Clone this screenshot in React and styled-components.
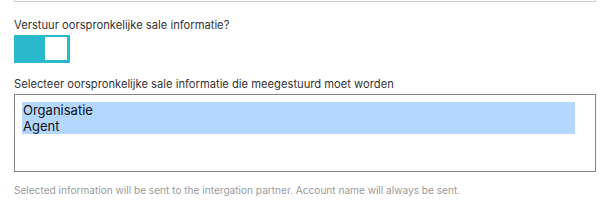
import React, { useState } from 'react';
import styled, { createGlobalStyle } from 'styled-components';

const GlobalStyle = createGlobalStyle`
    body {
        margin: 0;
        background: #fff;
        font-family: Inter, "Liberation Sans", sans-serif;
        color: #333;
    }
`;

const Page = styled.div`
    width: 582px;
    padding: 0 12px 0 14px;
`;

const PrevField = styled.div`
    height: 1px;
    border: 1px solid #cfcfcf;
    border-top: none;
`;

const Label = styled.div`
    font-size: 11.2px;
    line-height: 14px;
    color: #333;
    margin-top: ${props => props.top}px;
`;

const Toggle = styled.button`
    display: flex;
    justify-content: ${props => (props.on ? 'flex-end' : 'flex-start')};
    width: 56px;
    height: 28px;
    margin-top: 3px;
    padding: 2px 3px 2px 2px;
    border: none;
    background: ${props => (props.on ? '#29b7cb' : '#ccc')};
    cursor: pointer;
`;

const Knob = styled.span`
    display: block;
    width: 22px;
    height: 23px;
    background: #fff;
`;

const ListBox = styled.div`
    height: 62px;
    margin-top: 3px;
    padding: 7px 20px 7px 7px;
    border: 1px solid #858585;
`;

const Option = styled.div`
    font-size: 13px;
    line-height: 16px;
    color: #111;
    padding-left: 1px;
    background: ${props => (props.selected ? '#b3d7ff' : 'transparent')};
`;

const Help = styled.div`
    margin-top: 12px;
    font-size: 10.1px;
    line-height: 13px;
    color: #9a9a9a;
`;

const options = ['Organisatie', 'Agent'];

export default function App() {
    const [on, setOn] = useState(true);

    return (
        <Page>
            <GlobalStyle />
            <PrevField />
            <Label top={16}>Verstuur oorspronkelijke sale informatie?</Label>
            <Toggle on={on} onClick={() => setOn(!on)}>
                <Knob />
            </Toggle>
            <Label top={14}>Selecteer oorspronkelijke sale informatie die meegestuurd moet worden</Label>
            <ListBox>
                {options.map(option => (
                    <Option key={option} selected>{option}</Option>
                ))}
            </ListBox>
            <Help>Selected information will be sent to the intergation partner. Account name will always be sent.</Help>
        </Page>
    );
}
